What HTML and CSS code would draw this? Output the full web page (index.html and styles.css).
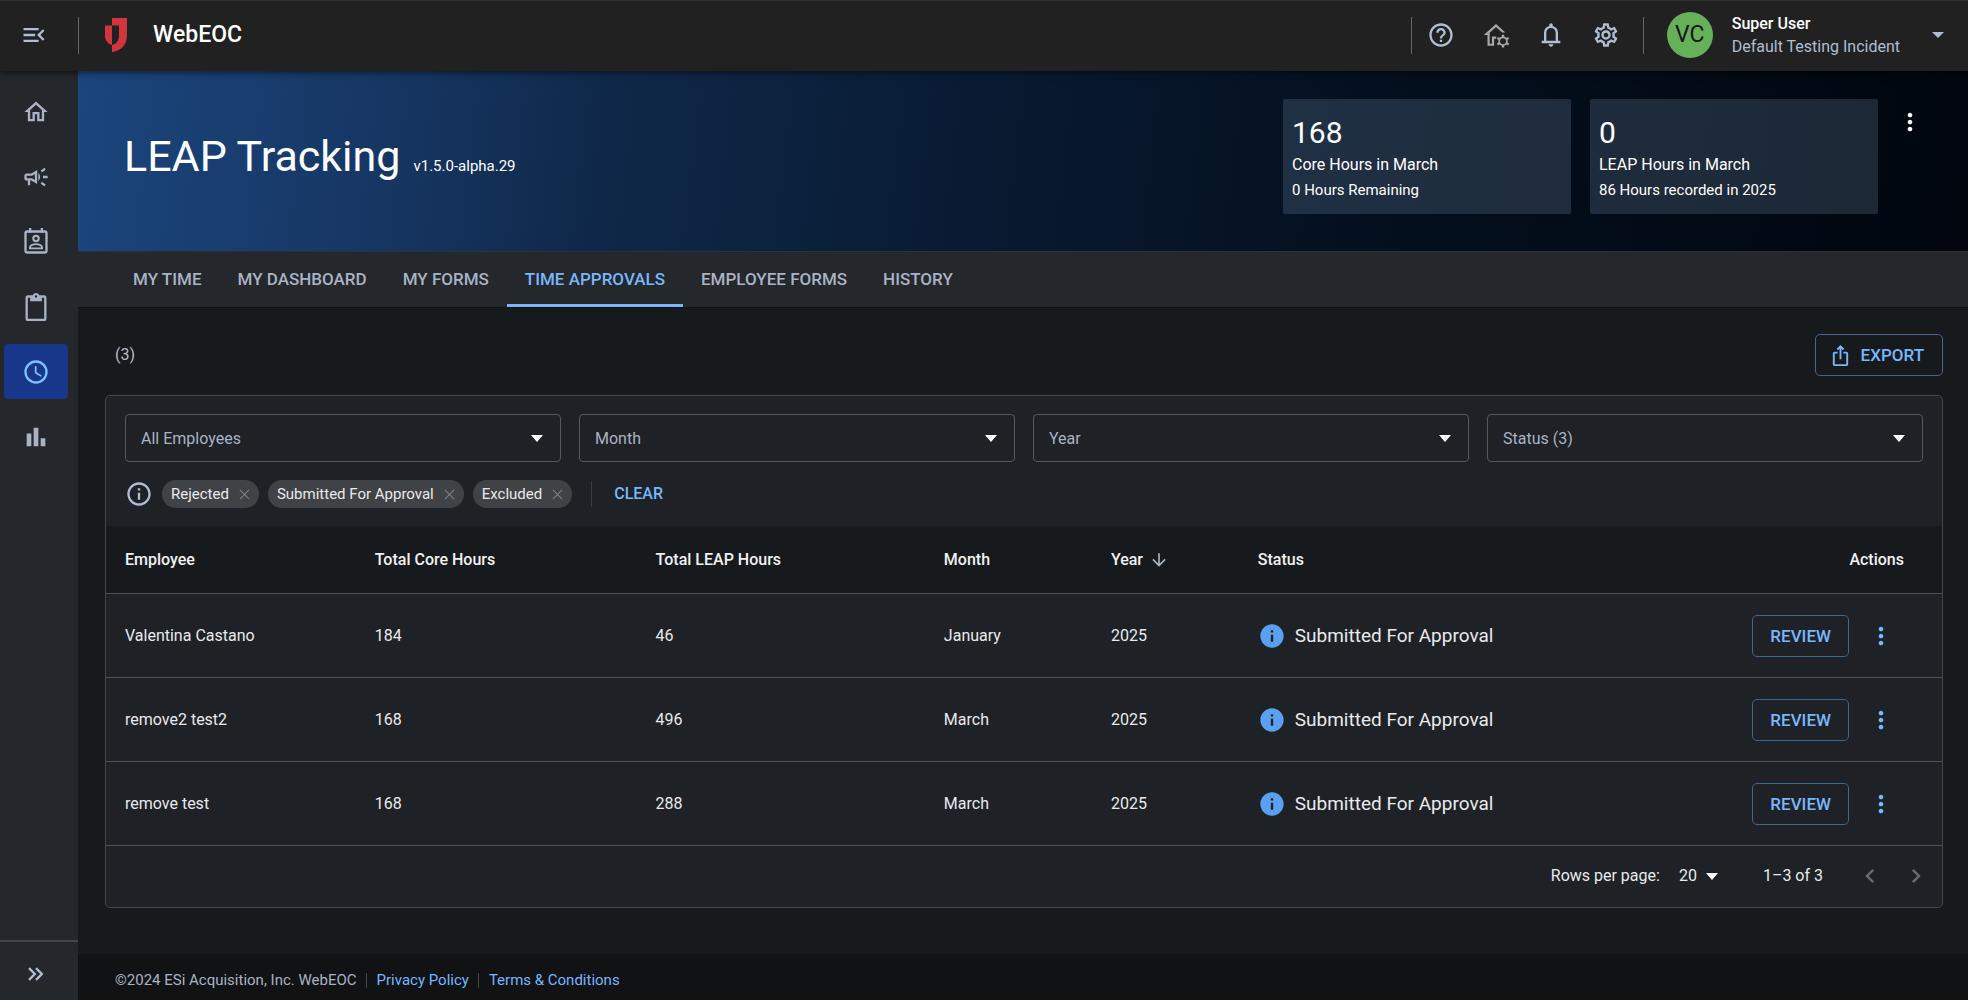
FILE: index.html
```
<!DOCTYPE html>
<html lang="en">
<head>
    <meta charset="UTF-8">
    <meta name="viewport" content="width=device-width, initial-scale=1.0">
    <title>WebEOC - LEAP Tracking</title>
    <link rel="stylesheet" href="styles.css">
</head>
<body>
    <!-- shared icons -->
    <svg class="sprite" aria-hidden="true">
        <symbol id="icon-gear" viewBox="0 0 24 24">
            <path d="M19.43 12.98c.04-.32.07-.64.07-.98 0-.34-.03-.66-.07-.98l2.11-1.65c.19-.15.24-.42.12-.64l-2-3.46c-.09-.16-.26-.25-.44-.25-.06 0-.12.01-.17.03l-2.49 1c-.52-.4-1.08-.73-1.69-.98l-.38-2.65C14.46 2.18 14.25 2 14 2h-4c-.25 0-.46.18-.49.42l-.38 2.65c-.61.25-1.17.59-1.69.98l-2.49-1c-.06-.02-.12-.03-.18-.03-.17 0-.34.09-.43.25l-2 3.46c-.13.22-.07.49.12.64l2.11 1.65c-.04.32-.07.65-.07.98 0 .33.03.66.07.98l-2.11 1.65c-.19.15-.24.42-.12.64l2 3.46c.09.16.26.25.44.25.06 0 .12-.01.17-.03l2.49-1c.52.4 1.08.73 1.69.98l.38 2.65c.03.24.24.42.49.42h4c.25 0 .46-.18.49-.42l.38-2.65c.61-.25 1.17-.59 1.69-.98l2.49 1c.06.02.12.03.18.03.17 0 .34-.09.43-.25l2-3.46c.12-.22.07-.49-.12-.64l-2.11-1.65zm-1.98-1.71c.04.31.05.52.05.73 0 .21-.02.43-.05.73l-.14 1.13.89.7 1.08.84-.7 1.21-1.27-.51-1.04-.42-.9.68c-.43.32-.84.56-1.25.73l-1.06.43-.16 1.13-.2 1.35h-1.4l-.19-1.35-.16-1.13-1.06-.43c-.43-.18-.83-.41-1.23-.71l-.91-.7-1.06.43-1.27.51-.7-1.21 1.08-.84.89-.7-.14-1.13c-.03-.31-.05-.54-.05-.74s.02-.43.05-.73l.14-1.13-.89-.7-1.08-.84.7-1.21 1.27.51 1.04.42.9-.68c.43-.32.84-.56 1.25-.73l1.06-.43.16-1.13.2-1.35h1.39l.19 1.35.16 1.13 1.06.43c.43.18.83.41 1.23.71l.91.7 1.06-.43 1.27-.51.7 1.21-1.07.85-.89.7.14 1.13zM12 8c-2.21 0-4 1.79-4 4s1.79 4 4 4 4-1.79 4-4-1.79-4-4-4zm0 6c-1.1 0-2-.9-2-2s.9-2 2-2 2 .9 2 2-.9 2-2 2z"/>
        </symbol>
        <symbol id="icon-info" viewBox="0 0 24 24">
            <path d="M12 2C6.48 2 2 6.48 2 12s4.48 10 10 10 10-4.48 10-10S17.52 2 12 2zm1 15h-2v-6h2v6zm0-8h-2V7h2v2z"/>
        </symbol>
        <symbol id="icon-more" viewBox="0 0 24 24">
            <path d="M12 8c1.1 0 2-.9 2-2s-.9-2-2-2-2 .9-2 2 .9 2 2 2zm0 2c-1.1 0-2 .9-2 2s.9 2 2 2 2-.9 2-2-.9-2-2-2zm0 6c-1.1 0-2 .9-2 2s.9 2 2 2 2-.9 2-2-.9-2-2-2z"/>
        </symbol>
        <symbol id="icon-close" viewBox="0 0 24 24">
            <path d="M20 5.200 18.800 4 12 10.800 5.200 4 4 5.200 10.800 12 4 18.800 5.200 20 12 13.200 18.800 20 20 18.800 13.200 12z"/>
        </symbol>
    </svg>

    <header class="topbar">
        <div class="menu-cell">
            <button type="button" class="icon-btn" aria-label="Collapse menu">
                <svg class="icon" viewBox="0 0 24 24"><path d="M3 18h13v-2H3v2zM3 6v2h13V6H3zm0 7h10v-2H3v2zm18 2.590L17.420 12 21 8.410 19.590 7l-5 5 5 5L21 15.590z"/></svg>
            </button>
        </div>
        <svg class="logo" viewBox="0 0 22 34" aria-hidden="true">
            <path d="M0 7.500h7V27C3 26 0 22.500 0 18z"/>
            <path d="M7 0h15v17c0 10-6 16-15 17v-7c4.500-1 7-4.500 7-9V7.500H7z"/>
        </svg>
        <span class="brand">WebEOC</span>
        <div class="top-actions">
            <button type="button" class="icon-btn" aria-label="Help">
                <svg class="icon" viewBox="0 0 24 24"><path d="M11 18h2v-2h-2v2zm1-16C6.480 2 2 6.480 2 12s4.480 10 10 10 10-4.480 10-10S17.520 2 12 2zm0 18c-4.410 0-8-3.590-8-8s3.590-8 8-8 8 3.590 8 8-3.590 8-8 8zm0-14c-2.210 0-4 1.790-4 4h2c0-1.100.9-2 2-2s2 .9 2 2c0 2-3 1.750-3 5h2c0-2.250 3-2.500 3-5 0-2.210-1.790-4-4-4z"/></svg>
            </button>
            <button type="button" class="icon-btn home-settings" aria-label="Home settings">
                <svg class="icon" viewBox="0 0 24 24">
                    <path d="M1.500 12 12 2.500l8 7.300h-2.800L12 5.100 6.600 10v9.500h1.900v-6.300h3.700v2h-1.800v6.100H4.700V12z"/>
                    <g fill="none" stroke="currentColor">
                        <circle cx="18" cy="17.300" r="3.300" stroke-width="1.500"/>
                        <path d="M18 11.800v2M18 20.800v2M13.200 14.500l1.800 1M21 19.100l1.800 1M13.200 20.100l1.800-1M21 15.500l1.800-1" stroke-width="2"/>
                    </g>
                </svg>
            </button>
            <button type="button" class="icon-btn" aria-label="Notifications">
                <svg class="icon" viewBox="0 0 24 24"><path d="M4 19v-2h2v-7q0-2.075 1.250-3.687T10.500 4.200v-.7q0-.625.438-1.062T12 2t1.063.438T13.500 3.500v.7q2 .5 3.250 2.113T18 10v7h2v2zm8 3q-.825 0-1.412-.587T10 20h4q0 .825-.587 1.413T12 22m-4-5h8v-7q0-1.650-1.175-2.825T12 6T9.175 7.175T8 10z"/></svg>
            </button>
            <button type="button" class="icon-btn" aria-label="Settings">
                <svg class="icon"><use href="#icon-gear"/></svg>
            </button>
        </div>
        <button type="button" class="user">
            <span class="avatar">VC</span>
            <span class="user-info">
                <span class="user-name">Super User</span>
                <span>Default Testing Incident</span>
            </span>
            <span class="caret"></span>
        </button>
    </header>

    <div class="layout">
        <nav class="sidebar" aria-label="Main">
            <a href="#" class="side-link" aria-label="Home">
                <svg class="icon" viewBox="0 0 24 24"><path d="M12 5.690l5 4.500V18h-2v-6H9v6H7v-7.810l5-4.500M12 3L2 12h3v8h6v-6h2v6h6v-8h3L12 3z"/></svg>
            </a>
            <a href="#" class="side-link" aria-label="Announcements">
                <svg class="icon" viewBox="0 0 24 24"><path d="M18 11v2h4v-2zM16 17.610c.96.71 2.210 1.650 3.200 2.390.4-.53.8-1.070 1.200-1.600-.99-.74-2.240-1.680-3.200-2.400-.4.54-.8 1.080-1.200 1.610zM20.400 5.600c-.4-.53-.8-1.070-1.200-1.600-.99.74-2.240 1.680-3.200 2.400.4.530.8 1.070 1.200 1.600.96-.72 2.210-1.650 3.200-2.400zM4 9c-1.100 0-2 .9-2 2v2c0 1.100.9 2 2 2h1v4h2v-4h1l5 3V6L8 9H4zm5.030 1.710L11 9.530v4.940l-1.970-1.180-.55-.29H4v-2h4.480l.55-.29zM15.500 12c0-1.330-.58-2.530-1.500-3.350v6.690c.92-.81 1.500-2.010 1.500-3.340z"/></svg>
            </a>
            <a href="#" class="side-link" aria-label="Contacts">
                <svg class="icon" viewBox="0 0 24 24">
                    <rect x="3" y="3" width="18" height="18" rx="1.500" fill="none" stroke="currentColor" stroke-width="2"/>
                    <path d="M6 0h2v4H6zM16 0h2v4h-2z"/>
                    <circle cx="12" cy="9" r="2.300" fill="none" stroke="currentColor" stroke-width="1.800"/>
                    <path d="M6.800 17.500v-.8c0-1.900 3.200-2.900 5.200-2.900s5.200 1 5.200 2.900v.8z" fill="none" stroke="currentColor" stroke-width="1.600"/>
                </svg>
            </a>
            <a href="#" class="side-link" aria-label="Boards">
                <svg class="icon" viewBox="0 0 24 24"><path d="M19 2h-4.180C14.400.84 13.300 0 12 0c-1.300 0-2.400.84-2.820 2H5c-1.100 0-2 .9-2 2v18c0 1.100.9 2 2 2h14c1.100 0 2-.9 2-2V4c0-1.100-.9-2-2-2zm-7 0c.55 0 1 .45 1 1s-.45 1-1 1-1-.45-1-1 .45-1 1-1zm7 20H5V4h2v3h10V4h2v18z"/></svg>
            </a>
            <a href="#" class="side-link active" aria-label="Time tracking">
                <svg class="icon" viewBox="0 0 24 24">
                    <circle cx="12" cy="12" r="9" fill="none" stroke="currentColor" stroke-width="2"/>
                    <path d="M12.500 7H11v6l5.250 3.150.75-1.230-4.500-2.670z"/>
                </svg>
            </a>
            <a href="#" class="side-link" aria-label="Reports">
                <svg class="icon" viewBox="0 0 24 24"><path d="M4 9h4v11H4zm12 4h4v7h-4zm-6-9h4v16h-4z"/></svg>
            </a>
            <button type="button" class="expand" aria-label="Expand sidebar">
                <svg class="icon" viewBox="0 0 24 24"><path d="M6 7l5 5-5 5M12 7l5 5-5 5" fill="none" stroke="currentColor" stroke-width="2"/></svg>
            </button>
        </nav>

        <div class="content">
            <section class="banner">
                <div class="title">
                    <h1>LEAP Tracking</h1>
                    <span class="version">v1.5.0-alpha.29</span>
                </div>
                <div class="card">
                    <strong>168</strong>
                    <span>Core Hours in March</span>
                    <small>0 Hours Remaining</small>
                </div>
                <div class="card">
                    <strong>0</strong>
                    <span>LEAP Hours in March</span>
                    <small>86 Hours recorded in 2025</small>
                </div>
                <button type="button" class="more-btn" aria-label="More options"><svg class="icon"><use href="#icon-more"/></svg></button>
            </section>

            <nav class="tabs" aria-label="LEAP Tracking">
                <a href="#">MY TIME</a>
                <a href="#">MY DASHBOARD</a>
                <a href="#">MY FORMS</a>
                <a href="#" class="active">TIME APPROVALS</a>
                <a href="#">EMPLOYEE FORMS</a>
                <a href="#">HISTORY</a>
            </nav>

            <main>
                <div class="toolbar">
                    <span>(3)</span>
                    <button type="button" class="outline-btn">
                        <svg class="export-icon" viewBox="0 0 24 24"><path d="m16 5-1.420 1.420-1.590-1.590V16h-1.980V4.830L9.420 6.420 8 5l4-4 4 4zm4 5v11c0 1.100-.9 2-2 2H6c-1.110 0-2-.9-2-2V10c0-1.110.89-2 2-2h3v2H6v11h12V10h-3V8h3c1.100 0 2 .89 2 2z"/></svg>
                        EXPORT
                    </button>
                </div>

                <div class="panel">
                    <form class="filters">
                        <select aria-label="Employee"><option>All Employees</option></select>
                        <select aria-label="Month"><option>Month</option></select>
                        <select aria-label="Year"><option>Year</option></select>
                        <select aria-label="Status"><option>Status (3)</option></select>
                    </form>

                    <div class="chips">
                        <svg class="icon" viewBox="0 0 24 24"><path d="M11 7h2v2h-2zm0 4h2v6h-2zm1-9C6.480 2 2 6.480 2 12s4.480 10 10 10 10-4.480 10-10S17.520 2 12 2zm0 18c-4.410 0-8-3.590-8-8s3.590-8 8-8 8 3.590 8 8-3.590 8-8 8z"/></svg>
                        <span class="chip">Rejected <button type="button" aria-label="Remove Rejected"><svg><use href="#icon-close"/></svg></button></span>
                        <span class="chip">Submitted For Approval <button type="button" aria-label="Remove Submitted For Approval"><svg><use href="#icon-close"/></svg></button></span>
                        <span class="chip">Excluded <button type="button" aria-label="Remove Excluded"><svg><use href="#icon-close"/></svg></button></span>
                        <button type="button" class="clear">CLEAR</button>
                    </div>

                    <table>
                        <colgroup>
                            <col class="col-employee">
                            <col class="col-core">
                            <col class="col-leap">
                            <col class="col-month">
                            <col class="col-year">
                            <col>
                            <col>
                        </colgroup>
                        <thead>
                            <tr>
                                <th>Employee</th>
                                <th>Total Core Hours</th>
                                <th>Total LEAP Hours</th>
                                <th>Month</th>
                                <th><span class="sort">Year <svg viewBox="0 0 24 24"><path d="m20 12-1.410-1.410L13 16.170V4h-2v12.170l-5.580-5.590L4 12l8 8 8-8z"/></svg></span></th>
                                <th>Status</th>
                                <th class="actions-head">Actions</th>
                            </tr>
                        </thead>
                        <tbody>
                            <tr>
                                <td>Valentina Castano</td>
                                <td>184</td>
                                <td>46</td>
                                <td>January</td>
                                <td>2025</td>
                                <td><span class="status"><svg class="icon"><use href="#icon-info"/></svg>Submitted For Approval</span></td>
                                <td><div class="actions"><button type="button" class="outline-btn">REVIEW</button><button type="button" class="more-btn" aria-label="More actions"><svg class="icon"><use href="#icon-more"/></svg></button></div></td>
                            </tr>
                            <tr>
                                <td>remove2 test2</td>
                                <td>168</td>
                                <td>496</td>
                                <td>March</td>
                                <td>2025</td>
                                <td><span class="status"><svg class="icon"><use href="#icon-info"/></svg>Submitted For Approval</span></td>
                                <td><div class="actions"><button type="button" class="outline-btn">REVIEW</button><button type="button" class="more-btn" aria-label="More actions"><svg class="icon"><use href="#icon-more"/></svg></button></div></td>
                            </tr>
                            <tr>
                                <td>remove test</td>
                                <td>168</td>
                                <td>288</td>
                                <td>March</td>
                                <td>2025</td>
                                <td><span class="status"><svg class="icon"><use href="#icon-info"/></svg>Submitted For Approval</span></td>
                                <td><div class="actions"><button type="button" class="outline-btn">REVIEW</button><button type="button" class="more-btn" aria-label="More actions"><svg class="icon"><use href="#icon-more"/></svg></button></div></td>
                            </tr>
                        </tbody>
                    </table>

                    <div class="pagination">
                        <label for="rows">Rows per page:</label>
                        <select id="rows"><option>20</option></select>
                        <span class="range">1–3 of 3</span>
                        <button type="button" class="page-btn" aria-label="Previous page" disabled><svg class="icon" viewBox="0 0 24 24"><path d="M15.410 7.410 14 6l-6 6 6 6 1.410-1.410L10.830 12z"/></svg></button>
                        <button type="button" class="page-btn" aria-label="Next page" disabled><svg class="icon" viewBox="0 0 24 24"><path d="M10 6 8.590 7.410 13.170 12l-4.580 4.590L10 18l6-6z"/></svg></button>
                    </div>
                </div>
            </main>

            <footer>
                <span>©2024 ESi Acquisition, Inc. WebEOC</span>
                <a href="#">Privacy Policy</a>
                <a href="#">Terms &amp; Conditions</a>
            </footer>
        </div>
    </div>
</body>
</html>
```
FILE: styles.css
```
* {
    box-sizing: border-box;
}
body {
    margin: 0;
    min-height: 100vh;
    display: flex;
    flex-direction: column;
    background-color: #171a1c;
    color: #e8eaed;
    font-family: Roboto, Arial, sans-serif;
    font-size: 16px;
    line-height: 20px;
}
button,
select {
    font: inherit;
    color: inherit;
    background: none;
    border: none;
    padding: 0;
    cursor: pointer;
}
a {
    color: #78b6ff;
    text-decoration: none;
}
svg {
    fill: currentColor;
    display: block;
    flex-shrink: 0;
}
.sprite {
    position: absolute;
    width: 0;
    height: 0;
}
.icon {
    width: 28px;
    height: 28px;
}

/* top bar */
.topbar {
    position: relative;
    z-index: 1;
    display: flex;
    align-items: center;
    height: 71px;
    padding: 0 24px 2px 0;
    border-top: 1px solid #333;
    background-color: #212121;
    color: #b0bdd2;
    box-shadow: 0 2px 6px rgba(0, 0, 0, 0.5);
}
.menu-cell {
    width: 79px;
    height: 37px;
    padding-left: 20px;
    display: flex;
    align-items: center;
    border-right: 1px solid #666;
}
.logo {
    width: 22px;
    height: 34px;
    margin: 0 26px;
    color: #d2353e;
}
.brand {
    flex: 1;
    color: #fff;
    font-size: 23px;
    font-weight: 500;
}
.top-actions {
    display: flex;
    align-items: center;
    gap: 27px;
    height: 37px;
    padding: 0 23px 0 15px;
    border-left: 1px solid #666;
    border-right: 1px solid #666;
}
.home-settings {
    color: #a8a8a8;
}
.user {
    display: flex;
    align-items: center;
    margin-left: 23px;
    text-align: left;
}
.avatar {
    width: 46px;
    height: 46px;
    margin-right: 19px;
    border-radius: 50%;
    background-color: #66b05a;
    color: #151515;
    font-size: 23px;
    line-height: 46px;
    text-align: center;
}
.user-info {
    display: grid;
    gap: 3px;
}
.user-name {
    color: #fff;
    font-weight: 500;
}
.caret {
    margin-left: 32px;
    border: 6px solid transparent;
    border-top-color: currentColor;
    border-bottom: none;
}

/* sidebar */
.layout {
    flex: 1;
    display: flex;
}
.sidebar {
    width: 78px;
    display: flex;
    flex-direction: column;
    gap: 10px;
    padding-top: 13px;
    background-color: #24272b;
    color: #a9b3c3;
}
.side-link {
    display: grid;
    place-items: center;
    height: 55px;
    margin: 0 10px 0 4px;
    border-radius: 4px;
    color: inherit;
}
.side-link.active {
    background-color: #18378a;
    color: #7cc0ff;
}
.expand {
    display: grid;
    place-items: center;
    height: 60px;
    margin-top: auto;
    padding: 6px 6px 0 0;
    border-top: 2px solid #42464a;
    color: #b0bdd2;
}

/* banner */
.content {
    flex: 1;
    display: flex;
    flex-direction: column;
}
.banner {
    display: flex;
    align-items: flex-start;
    gap: 19px;
    height: 180px;
    padding: 28px 35px 0 46px;
    background: linear-gradient(97deg, #1b457c 0%, #173866 15%, #0f2849 28%, #08192f 50%, #04101f 68%, #01060f 100%);
    color: #fff;
}
.title {
    flex: 1;
    display: flex;
    align-items: baseline;
    gap: 13px;
    padding-top: 31px;
}
h1 {
    margin: 0;
    font-size: 43px;
    line-height: 52px;
    font-weight: 400;
}
.version {
    font-size: 15px;
}
.card {
    display: grid;
    align-content: start;
    width: 288px;
    height: 115px;
    padding: 16px 9px;
    border-radius: 2px;
    background-color: rgba(157, 188, 220, 0.18);
}
.card strong {
    font-size: 30px;
    line-height: 36px;
    font-weight: 400;
}
.card span {
    line-height: 28px;
}
.card small {
    font-size: 15px;
    line-height: 22px;
}
.more-btn {
    display: grid;
    place-items: center;
    width: 46px;
    height: 46px;
}
.banner .more-btn {
    margin-left: -10px;
}

/* tabs */
.tabs {
    display: flex;
    height: 57px;
    padding-left: 37px;
    border-top: 1px solid #2e3033;
    border-bottom: 1px solid #101213;
    background-color: #24272b;
}
.tabs a {
    padding: 0 18px;
    border-bottom: 3px solid transparent;
    color: #a9b3c3;
    font-size: 17px;
    font-weight: 500;
    line-height: 54px;
}
.tabs a.active {
    border-color: #78b6ff;
    color: #78b6ff;
}

/* main */
main {
    flex: 1;
    padding: 26px 25px 46px 27px;
}
.toolbar {
    display: flex;
    align-items: center;
    justify-content: space-between;
    padding-left: 10px;
    margin-bottom: 19px;
    color: #b8bcc2;
}
.outline-btn {
    display: flex;
    align-items: center;
    gap: 9px;
    height: 42px;
    padding: 0 17px;
    border: 1px solid #44658c;
    border-radius: 5px;
    color: #78b6ff;
    font-size: 17px;
    font-weight: 500;
}
.toolbar .outline-btn {
    padding: 0 18px 0 13px;
}
.export-icon {
    width: 23px;
    height: 23px;
}
.panel {
    border: 1px solid #41474e;
    border-radius: 5px;
    background-color: #1e2125;
}
.filters {
    display: grid;
    grid-template-columns: repeat(4, 1fr);
    gap: 18px;
    padding: 18px 19px 0;
}
select {
    appearance: none;
    background: url("data:image/svg+xml,%3Csvg xmlns='http://www.w3.org/2000/svg' width='12' height='7'%3E%3Cpath d='M0 0h12L6 7z' fill='white'/%3E%3C/svg%3E") no-repeat right 17px center;
}
.filters select {
    width: 100%;
    height: 48px;
    padding: 2px 15px 0;
    border: 1px solid #55585c;
    border-radius: 4px;
    color: #a9b3c3;
}
.chips {
    display: flex;
    align-items: center;
    gap: 9px;
    padding: 18px 19px;
    font-size: 15px;
}
.chips .icon {
    color: #b0bdd2;
}
.chip {
    display: flex;
    align-items: center;
    gap: 8px;
    height: 28px;
    padding: 0 7px 0 9px;
    border-radius: 14px;
    background-color: #404346;
}
.chip svg {
    width: 15px;
    height: 15px;
    color: #7d8083;
}
.chips .clear {
    height: 26px;
    margin-left: 10px;
    padding-left: 22px;
    border-left: 1px solid #3a3d41;
    color: #78b6ff;
    font-size: 16px;
    font-weight: 500;
}

/* table */
table {
    width: 100%;
    table-layout: fixed;
    border-collapse: collapse;
}
.col-employee {
    width: 13.6%;
}
.col-core {
    width: 15.3%;
}
.col-leap {
    width: 15.7%;
}
.col-month {
    width: 9.1%;
}
.col-year {
    width: 8%;
}
th,
td {
    padding: 2px 0 0 19px;
    text-align: left;
    border-bottom: 1px solid #505356;
}
th {
    height: 67px;
    background-color: #171a1c;
    color: #f0f1f3;
    font-weight: 500;
}
td {
    height: 84px;
}
.sort {
    display: flex;
    align-items: center;
    gap: 6px;
}
.sort svg {
    width: 20px;
    height: 20px;
    color: #a9b3c3;
}
.status {
    display: flex;
    align-items: center;
    gap: 9px;
    font-size: 19px;
}
.status .icon {
    color: #5a9ff0;
}
.actions-head {
    padding-right: 38px;
    text-align: right;
}
.actions {
    display: flex;
    justify-content: flex-end;
    align-items: center;
    gap: 9px;
    padding-right: 38px;
}
.actions .more-btn {
    color: #78b6ff;
}

/* pagination */
.pagination {
    display: flex;
    align-items: center;
    justify-content: flex-end;
    height: 61px;
    padding-right: 3px;
}
.pagination select {
    width: 56px;
    margin-left: 19px;
    padding: 0;
    background-position: right 17px center;
}
.range {
    margin: 0 24px 0 28px;
}
.page-btn {
    display: grid;
    place-items: center;
    width: 46px;
    height: 46px;
    color: #6a6d70;
}

/* footer */
footer {
    display: flex;
    align-items: center;
    height: 46px;
    padding: 6px 37px 0;
    background-color: #111213;
    color: #a9b3c3;
    font-size: 15px;
    line-height: 15px;
}
footer a {
    margin-left: 9px;
    padding-left: 10px;
    border-left: 1px solid #44474b;
}
```
